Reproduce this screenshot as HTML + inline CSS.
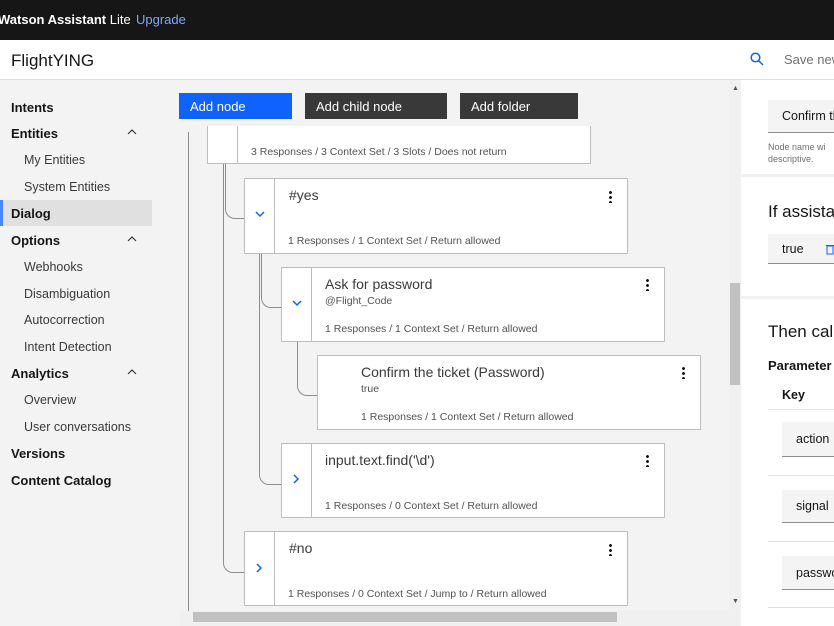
<!DOCTYPE html>
<html><head><style>
*{margin:0;padding:0;box-sizing:border-box}
body{width:834px;height:626px;overflow:hidden;background:#f3f3f3;font-family:"Liberation Sans",sans-serif;position:relative;color:#161616}
.a{position:absolute}
.top{left:0;top:0;width:834px;height:40px;background:#161616}
.hdr{left:0;top:40px;width:834px;height:40px;background:#fff;border-bottom:1px solid #e0e0e0}
.nav{font-size:13px;color:#161616;font-weight:bold}
.sub{font-size:12.5px;color:#393939}
.btn{height:26px;color:#fff;font-size:13px;padding:6px 11px}
.node{background:#fff;border:1px solid #bdbdbd}
.div{border-left:1px solid #bdbdbd}
.t{font-size:14px;color:#393939;white-space:nowrap}
.s{font-size:10.5px;color:#525252;white-space:nowrap}
.dots{width:3px;height:13px;background:radial-gradient(circle,#161616 1.3px,transparent 1.6px) 0 0/3px 5px repeat-y}
.ln{border:1.2px solid #8d8d8d;border-top:none;border-right:none;border-radius:0 0 0 10px}
.box{background:#f4f4f4;border-bottom:1px solid #8d8d8d;font-size:12.5px;color:#161616;padding:0 0 0 14px;white-space:nowrap;overflow:hidden}
.hr{left:741px;width:93px;height:1px;background:#e0e0e0}
</style></head><body>
<div class="a top"></div>
<div class="a" style="left:-2px;top:12px;color:#fff;font-size:13px;white-space:nowrap"><b>Watson Assistant</b> Lite</div>
<div class="a" style="left:136px;top:12px;color:#78a9ff;font-size:13px">Upgrade</div>
<div class="a hdr"></div>
<div class="a" style="left:11px;top:51px;font-size:17px">FlightYING</div>
<svg class="a" style="left:750px;top:52px" width="14" height="14" viewBox="0 0 14 14"><circle cx="5.5" cy="5.5" r="4.3" fill="none" stroke="#0f62fe" stroke-width="1.5"/><path d="M8.7 8.7L13 13" stroke="#0f62fe" stroke-width="1.5"/></svg>
<div class="a" style="left:784px;top:52px;font-size:13px;color:#6f6f6f;white-space:nowrap">Save new</div>

<div class="a" style="left:0;top:200px;width:152px;height:26px;background:#e0e0e0;border-left:3px solid #4589ff"></div>
<div class="a nav" style="left:11px;top:100px">Intents</div>
<div class="a nav" style="left:11px;top:126px">Entities</div>
<div class="a sub" style="left:24px;top:153px">My Entities</div>
<div class="a sub" style="left:24px;top:180px">System Entities</div>
<div class="a nav" style="left:11px;top:206px">Dialog</div>
<div class="a nav" style="left:11px;top:233px">Options</div>
<div class="a sub" style="left:24px;top:260px">Webhooks</div>
<div class="a sub" style="left:24px;top:287px">Disambiguation</div>
<div class="a sub" style="left:24px;top:313px">Autocorrection</div>
<div class="a sub" style="left:24px;top:340px">Intent Detection</div>
<div class="a nav" style="left:11px;top:366px">Analytics</div>
<div class="a sub" style="left:24px;top:393px">Overview</div>
<div class="a sub" style="left:24px;top:420px">User conversations</div>
<div class="a nav" style="left:11px;top:446px">Versions</div>
<div class="a nav" style="left:11px;top:473px">Content Catalog</div>
<svg class="a" style="left:127px;top:129px" width="10" height="6"><path d="M1 5L5 1L9 5" fill="none" stroke="#393939" stroke-width="1.2"/></svg>
<svg class="a" style="left:127px;top:236px" width="10" height="6"><path d="M1 5L5 1L9 5" fill="none" stroke="#393939" stroke-width="1.2"/></svg>
<svg class="a" style="left:127px;top:369px" width="10" height="6"><path d="M1 5L5 1L9 5" fill="none" stroke="#393939" stroke-width="1.2"/></svg>

<div class="a btn" style="left:179px;top:93px;width:113px;background:#0f62fe">Add node</div>
<div class="a btn" style="left:305px;top:93px;width:142px;background:#393939">Add child node</div>
<div class="a btn" style="left:460px;top:93px;width:118px;background:#393939">Add folder</div>

<div class="a" style="left:188px;top:132px;width:1.2px;height:479px;background:#8d8d8d"></div>
<div class="a ln" style="left:225px;top:163px;width:20px;height:56px"></div>
<div class="a ln" style="left:223px;top:163px;width:22px;height:410px"></div>
<div class="a ln" style="left:261px;top:253px;width:21px;height:55px"></div>
<div class="a ln" style="left:259px;top:253px;width:23px;height:232px"></div>
<div class="a ln" style="left:297px;top:341px;width:21px;height:55px"></div>

<div class="a node" style="left:207px;top:126px;width:384px;height:38px;border-top:none"><div class="a div" style="left:29px;top:0;height:37px"></div><div class="a s" style="left:43px;top:20px">3 Responses / 3 Context Set / 3 Slots / Does not return</div></div>

<div class="a node" style="left:244px;top:178px;width:384px;height:76px"><div class="a div" style="left:29px;top:0;height:74px"></div>
<svg class="a" style="left:10px;top:32px" width="10" height="7"><path d="M1 1L5 5L9 1" fill="none" stroke="#0f62fe" stroke-width="1.5"/></svg>
<div class="a t" style="left:44px;top:8px">#yes</div><div class="a dots" style="left:364px;top:11px"></div><div class="a s" style="left:43px;top:56px">1 Responses / 1 Context Set / Return allowed</div></div>

<div class="a node" style="left:281px;top:267px;width:384px;height:75px"><div class="a div" style="left:29px;top:0;height:73px"></div>
<svg class="a" style="left:10px;top:32px" width="10" height="7"><path d="M1 1L5 5L9 1" fill="none" stroke="#0f62fe" stroke-width="1.5"/></svg>
<div class="a t" style="left:43px;top:8px">Ask for password</div><div class="a s" style="left:43px;top:27px">@Flight_Code</div><div class="a dots" style="left:364px;top:10px"></div><div class="a s" style="left:43px;top:55px">1 Responses / 1 Context Set / Return allowed</div></div>

<div class="a node" style="left:317px;top:355px;width:384px;height:75px">
<div class="a t" style="left:43px;top:8px">Confirm the ticket (Password)</div><div class="a s" style="left:43px;top:27px">true</div><div class="a dots" style="left:364px;top:10px"></div><div class="a s" style="left:43px;top:55px">1 Responses / 1 Context Set / Return allowed</div></div>

<div class="a node" style="left:281px;top:443px;width:384px;height:75px"><div class="a div" style="left:29px;top:0;height:73px"></div>
<svg class="a" style="left:11px;top:30px" width="7" height="10"><path d="M1 1L5 5L1 9" fill="none" stroke="#0f62fe" stroke-width="1.5"/></svg>
<div class="a t" style="left:43px;top:8px">input.text.find('\d')</div><div class="a dots" style="left:364px;top:10px"></div><div class="a s" style="left:43px;top:56px">1 Responses / 0 Context Set / Return allowed</div></div>

<div class="a node" style="left:244px;top:531px;width:384px;height:75px"><div class="a div" style="left:29px;top:0;height:73px"></div>
<svg class="a" style="left:11px;top:31px" width="7" height="10"><path d="M1 1L5 5L1 9" fill="none" stroke="#0f62fe" stroke-width="1.5"/></svg>
<div class="a t" style="left:44px;top:8px">#no</div><div class="a dots" style="left:364px;top:11px"></div><div class="a s" style="left:43px;top:56px">1 Responses / 0 Context Set / Jump to / Return allowed</div></div>

<div class="a" style="left:729px;top:80px;width:12px;height:531px;background:#f0f0f0"></div>
<div class="a" style="left:730px;top:283px;width:10px;height:102px;background:#c1c1c1"></div>
<div class="a" style="left:732px;top:85px;font-size:7px;color:#555">▲</div>
<div class="a" style="left:732px;top:598px;font-size:7px;color:#555">▼</div>
<div class="a" style="left:180px;top:611px;width:560px;height:15px;background:#f0f0f0"></div>
<div class="a" style="left:193px;top:612px;width:424px;height:10px;background:#c1c1c1"></div>

<div class="a" style="left:741px;top:80px;width:93px;height:546px;background:#fff"></div>
<div class="a box" style="left:768px;top:100px;width:66px;height:33px;line-height:33px">Confirm the</div>
<div class="a" style="left:768px;top:141px;font-size:9px;color:#6f6f6f;line-height:12px;white-space:nowrap">Node name wi<br>descriptive.</div>
<div class="a" style="left:741px;top:174px;width:93px;height:3px;background:#f0f0f0"></div>
<div class="a" style="left:768px;top:202px;font-size:17px;white-space:nowrap">If assista</div>
<div class="a box" style="left:768px;top:234px;width:66px;height:30px;line-height:30px">true</div>
<svg class="a" style="left:826px;top:244px" width="8" height="11"><rect x="1" y="2" width="6" height="8" fill="none" stroke="#0f62fe"/><path d="M0 1.5H8" stroke="#0f62fe"/></svg>
<div class="a" style="left:741px;top:296px;width:93px;height:3px;background:#f0f0f0"></div>
<div class="a" style="left:768px;top:322px;font-size:17px;white-space:nowrap">Then call</div>
<div class="a" style="left:768px;top:358px;font-size:13px;font-weight:bold;white-space:nowrap">Parameter</div>
<div class="a" style="left:782px;top:388px;font-size:12.5px;font-weight:bold">Key</div>
<div class="a hr" style="left:768px;top:409px"></div>
<div class="a box" style="left:782px;top:422px;width:52px;height:35px;line-height:35px">action</div>
<div class="a hr" style="left:768px;top:475px"></div>
<div class="a box" style="left:782px;top:490px;width:52px;height:33px;line-height:33px">signal</div>
<div class="a hr" style="left:768px;top:541px"></div>
<div class="a box" style="left:782px;top:556px;width:52px;height:34px;line-height:34px">password</div>
<div class="a hr" style="left:768px;top:607px"></div>
</body></html>
